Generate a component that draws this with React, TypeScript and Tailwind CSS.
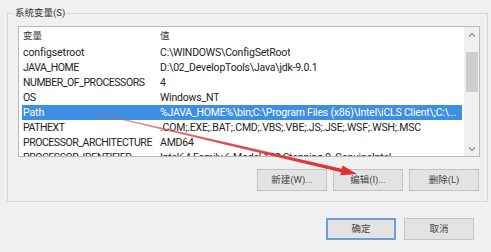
import React from "react";

type EnvRow = { name: string; value: string; selected?: boolean };

const rows: EnvRow[] = [
  { name: "configsetroot", value: "C:\\WINDOWS\\ConfigSetRoot" },
  { name: "JAVA_HOME", value: "D:\\02_DevelopTools\\Java\\jdk-9.0.1" },
  { name: "NUMBER_OF_PROCESSORS", value: "4" },
  { name: "OS", value: "Windows_NT" },
  { name: "Path", value: "%JAVA_HOME%\\bin;C:\\Program Files (x86)\\Intel\\iCLS Client\\;C:\\...", selected: true },
  { name: "PATHEXT", value: ".COM;.EXE;.BAT;.CMD;.VBS;.VBE;.JS;.JSE;.WSF;.WSH;.MSC" },
  { name: "PROCESSOR_ARCHITECTURE", value: "AMD64" },
  { name: "PROCESSOR_IDENTIFIER", value: "Intel64 Family 6 Model 142 Stepping 9, GenuineIntel" },
];

function DialogButton({ label, focused }: { label: string; focused?: boolean }) {
  return (
    <button
      className={
        focused
          ? "flex h-[22px] w-[70px] items-center justify-center border-2 border-[#6f9fd2] bg-[#e3e3e3] text-[9.5px] text-[#444]"
          : "flex h-[22px] w-[70px] items-center justify-center border border-[#c4c4c4] bg-[#e3e3e3] text-[9.5px] text-[#444]"
      }
      type="button"
    >
      {label}
    </button>
  );
}

function Chevron({ up }: { up?: boolean }) {
  return (
    <svg className="h-[6px] w-[8px]" viewBox="0 0 8 6">
      <polyline
        fill="none"
        points={up ? "1,4.5 4,1.5 7,4.5" : "1,1.5 4,4.5 7,1.5"}
        stroke="#8a8a8a"
        strokeWidth="1.1"
      />
    </svg>
  );
}

export default function App() {
  return (
    <div className="relative h-[252px] w-[491px] overflow-hidden bg-[#f0f0f0] pt-[7px] font-['Roboto','Noto_Sans_CJK_SC',sans-serif] text-[#222]">
      <fieldset className="ml-[7px] mr-[3px] h-[195px] border border-[#d6d6d6] pl-[10px] pr-[7px]">
        <legend className="-ml-[4px] px-[1px] text-[9.5px] leading-[12px] text-[#333]">系统变量(S)</legend>

        <div className="mt-[7px] flex h-[131px] border border-[#b9b9b9] bg-white">
          <div className="flex-1 overflow-hidden">
            <div className="flex h-[18px] items-center pl-[4px] text-[9.5px] text-[#333]">
              <span className="w-[137px]">变量</span>
              <span>值</span>
            </div>
            {rows.map((row) => (
              <div
                className={
                  row.selected
                    ? "ml-[3px] mr-[2px] flex h-[15px] items-center whitespace-nowrap bg-[#3d8fe4] pl-[1px] text-[10.5px] text-white"
                    : "ml-[3px] mr-[2px] flex h-[15px] items-center whitespace-nowrap pl-[1px] text-[10.5px]"
                }
                key={row.name}
              >
                <span
                  className={
                    row.name === row.name.toUpperCase()
                      ? "w-[137px] shrink-0 tracking-[-0.45px]"
                      : "w-[137px] shrink-0 tracking-[-0.1px]"
                  }
                >
                  {row.name}
                </span>
                <span className="truncate tracking-[-0.2px]">{row.value}</span>
              </div>
            ))}
          </div>
          <div className="flex w-[15px] flex-col items-center bg-[#f0f0f0]">
            <div className="flex h-[15px] items-center justify-center">
              <Chevron up />
            </div>
            <div className="mt-[10px] h-[40px] w-[12px] bg-[#cdcdcd]" />
            <div className="flex-1" />
            <div className="flex h-[15px] items-center justify-center">
              <Chevron />
            </div>
          </div>
        </div>

        <div className="mt-[12px] flex justify-end gap-[6px] pr-[1px]">
          <DialogButton label="新建(W)..." />
          <DialogButton label="编辑(I)..." />
          <DialogButton label="删除(L)" />
        </div>
      </fieldset>

      <div className="mt-[16px] flex justify-end gap-[8px] pr-[17px]">
        <DialogButton focused label="确定" />
        <DialogButton label="取消" />
      </div>

      <svg className="pointer-events-none absolute left-0 top-0 h-[252px] w-[491px]" viewBox="0 0 491 252">
        <defs>
          <linearGradient id="arrowFade" x1="93" x2="357" y1="112" y2="174" gradientUnits="userSpaceOnUse">
            <stop offset="0" stopColor="#e0585a" stopOpacity="0.55" />
            <stop offset="0.5" stopColor="#e0373a" stopOpacity="0.9" />
            <stop offset="1" stopColor="#e22d2f" />
          </linearGradient>
        </defs>
        <polygon
          fill="url(#arrowFade)"
          points="93.1,112.0 341.8,168.7 342.5,165.5 357,174 340.3,175.3 341.0,172.2 92.9,113.0"
        />
      </svg>
    </div>
  );
}
